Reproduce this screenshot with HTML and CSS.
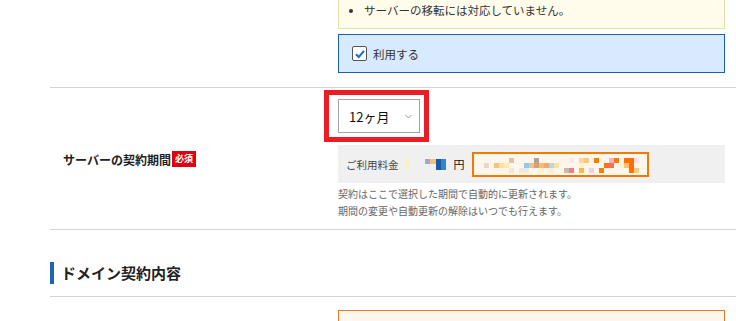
FILE: index.html
```html
<!DOCTYPE html>
<html lang="ja">
<head>
<meta charset="utf-8">
<link rel="stylesheet" href="styles.css">
</head>
<body>
<div class="page">
  <div class="row row-top">
    <div class="label"></div>
    <div class="field">
      <div class="notice">
        <ul><li>サーバーの移転には対応していません。</li></ul>
      </div>
      <label class="use-box">
        <span class="check">
          <svg width="12" height="12" viewBox="0 0 12 12"><polyline points="2,6.2 4.8,9 10,2.8" fill="none" stroke="#1a6ec8" stroke-width="2"/></svg>
        </span>
        <span class="use-text">利用する</span>
      </label>
    </div>
  </div>

  <div class="row row-term">
    <div class="label">
      <span class="label-text">サーバーの契約期間</span>
      <span class="badge">必須</span>
    </div>
    <div class="field">
      <div class="select-wrap">
        <div class="select">
          <span>12ヶ月</span>
          <svg class="chev" width="7" height="5" viewBox="0 0 7 5"><polyline points="0.5,1 3.5,4 6.5,1" fill="none" stroke="#999" stroke-width="1"/></svg>
        </div>
        <div class="highlight"></div>
      </div>
      <div class="price">
        <span class="price-label">ご利用料金</span>
        <svg class="yen-blur" width="41" height="11" viewBox="0 0 41 11">
          <rect x="0" y="0" width="5" height="11" fill="#f6f2c8"/>
          <rect x="20" y="0" width="5" height="5" fill="#a8a6c8"/>
          <rect x="25" y="0" width="6" height="5" fill="#f2c080"/>
          <rect x="31" y="0" width="5" height="11" fill="#1e5aa0"/>
          <rect x="36" y="0" width="5" height="11" fill="#2c86d0"/>
        </svg>
        <span class="yen">円</span>
        <div class="price-detail">
          <svg width="173" height="21" viewBox="0 0 173 21">
            <rect x="35" y="4" width="5" height="5" fill="#e8c0a0"/>
            <rect x="60" y="4" width="5" height="5" fill="#a8a890"/>
            <rect x="95" y="4" width="5" height="5" fill="#fde6f0"/>
            <rect x="105" y="4" width="5" height="5" fill="#fdd89a"/>
            <rect x="110" y="4" width="5" height="5" fill="#f8c880"/>
            <rect x="120" y="4" width="5" height="5" fill="#ff7a00"/>
            <rect x="135" y="4" width="5" height="5" fill="#f8b0d0"/>
            <rect x="140" y="4" width="5" height="5" fill="#ff7a00"/>
            <rect x="150" y="4" width="10" height="5" fill="#ff7000"/>
            <rect x="160" y="4" width="5" height="5" fill="#fde0ec"/>

            <rect x="10" y="9" width="5" height="5" fill="#e8d8c8"/>
            <rect x="20" y="9" width="5" height="5" fill="#f8c080"/>
            <rect x="25" y="9" width="5" height="5" fill="#fde0a0"/>
            <rect x="30" y="9" width="5" height="5" fill="#fde8b0"/>
            <rect x="50" y="9" width="5" height="5" fill="#90c8f0"/>
            <rect x="55" y="9" width="5" height="5" fill="#f0c090"/>
            <rect x="60" y="9" width="5" height="5" fill="#d8a070"/>
            <rect x="65" y="9" width="5" height="5" fill="#f8b880"/>
            <rect x="70" y="9" width="5" height="5" fill="#f0a870"/>
            <rect x="75" y="9" width="5" height="5" fill="#b0d8f0"/>
            <rect x="80" y="9" width="5" height="5" fill="#fde0a0"/>
            <rect x="105" y="9" width="5" height="5" fill="#fff2c8"/>
            <rect x="130" y="9" width="5" height="5" fill="#ff7020"/>
            <rect x="135" y="9" width="5" height="5" fill="#f87050"/>
            <rect x="145" y="9" width="5" height="5" fill="#fff0d0"/>
            <rect x="150" y="9" width="5" height="5" fill="#fcc070"/>
            <rect x="155" y="9" width="5" height="5" fill="#ff7000"/>

            <rect x="35" y="14" width="5" height="5" fill="#f0e8e0"/>
            <rect x="45" y="14" width="10" height="5" fill="#f0e8e0"/>
            <rect x="65" y="14" width="5" height="5" fill="#fef4c8"/>
            <rect x="75" y="14" width="5" height="5" fill="#fbecd8"/>
            <rect x="90" y="14" width="5" height="5" fill="#c8b8b0"/>
            <rect x="95" y="14" width="5" height="5" fill="#f87890"/>
            <rect x="105" y="14" width="5" height="5" fill="#fbb848"/>
            <rect x="115" y="14" width="5" height="5" fill="#fcc8f0"/>
            <rect x="125" y="14" width="5" height="5" fill="#ff7a00"/>
            <rect x="155" y="14" width="5" height="5" fill="#ff7000"/>
            <rect x="160" y="14" width="5" height="5" fill="#fcc880"/>
          </svg>
        </div>
      </div>
      <p class="note">契約はここで選択した期間で自動的に更新されます。<br>期間の変更や自動更新の解除はいつでも行えます。</p>
    </div>
  </div>

  <h2 class="section-title">ドメイン契約内容</h2>

  <div class="row row-domain">
    <div class="label"></div>
    <div class="field">
      <div class="domain-box"></div>
    </div>
  </div>
</div>
</body>
</html>
```

FILE: styles.css
```css
* { box-sizing: border-box; }

html, body {
  margin: 0;
  padding: 0;
  background: #fff;
  overflow: hidden;
}

body {
  font-family: "Noto Sans CJK JP", "Noto Sans", sans-serif;
  color: #333;
  width: 736px;
  height: 321px;
}

.page {
  padding-left: 50px;
}

.row {
  display: flex;
  border-bottom: 1px solid #d4d4d4;
}

.label {
  width: 288px;
  flex: none;
  display: flex;
  align-items: center;
  padding-left: 13px;
}

.field {
  width: 387px;
  flex: none;
}

/* top row */
.row-top {
  padding-bottom: 14px;
}

.notice {
  margin-top: -12px;
  background: #fffcec;
  border: 1px solid #e8dfa8;
  padding: 13px 10px 10px 12px;
  font-size: 11.5px;
  line-height: 16px;
}

.notice ul {
  margin: 0;
  padding-left: 13px;
}

.use-box {
  margin-top: 5px;
  height: 39px;
  display: flex;
  align-items: center;
  background: #d8eaff;
  border: 1px solid #1d5fae;
  padding-left: 13px;
  font-size: 11.5px;
}

.check {
  width: 15px;
  height: 15px;
  border: 1px solid #555;
  border-radius: 2px;
  background: #fff;
  display: flex;
  align-items: center;
  justify-content: center;
  margin-right: 6px;
}

/* term row */
.row-term {
  padding: 11px 0 10px;
}

.label-text {
  font-size: 12px;
  font-weight: bold;
  color: #222;
}

.badge {
  margin-left: 1px;
  background: #e00010;
  color: #fff;
  font-size: 9px;
  font-weight: bold;
  line-height: 16px;
  height: 16px;
  padding: 0 3px;
}

.select-wrap {
  position: relative;
  width: 82px;
}

.select {
  height: 34px;
  border: 1px solid #a4a4a4;
  background: #fff;
  display: flex;
  align-items: center;
  justify-content: space-between;
  padding: 0 7px 0 10px;
  font-size: 13px;
  color: #111;
}

.highlight {
  position: absolute;
  left: -14px;
  top: -9px;
  width: 105px;
  height: 52px;
  border: 5px solid #ec1c24;
}

.price {
  margin-top: 12px;
  height: 38px;
  background: #f0f0f0;
  display: flex;
  align-items: center;
  padding-left: 8px;
}

.price-label {
  font-size: 10.5px;
  color: #444;
}

.yen-blur {
  margin-left: 6px;
}

.yen {
  margin-left: 8px;
  font-size: 11px;
  color: #111;
}

.price-detail {
  margin-left: 7px;
  width: 177px;
  height: 25px;
  border: 2px solid #f27a00;
  background: #fff6eb;
  display: flex;
}

.note {
  margin: 2px 0 0;
  font-size: 10px;
  line-height: 17px;
  color: #666;
}

/* section heading */
.section-title {
  margin: 32px 0 0;
  padding: 0 0 12px;
  border-bottom: 1px solid #d4d4d4;
  font-size: 15px;
  font-weight: bold;
  color: #222;
  line-height: 22px;
}

.section-title::before {
  content: "";
  display: inline-block;
  vertical-align: top;
  width: 4px;
  height: 22px;
  background: #1e64b4;
  margin-right: 7px;
}

.row-domain {
  border-bottom: none;
  padding-top: 13px;
}

.domain-box {
  height: 40px;
  border: 1px solid #f07820;
  background: #fff8ee;
}
```
